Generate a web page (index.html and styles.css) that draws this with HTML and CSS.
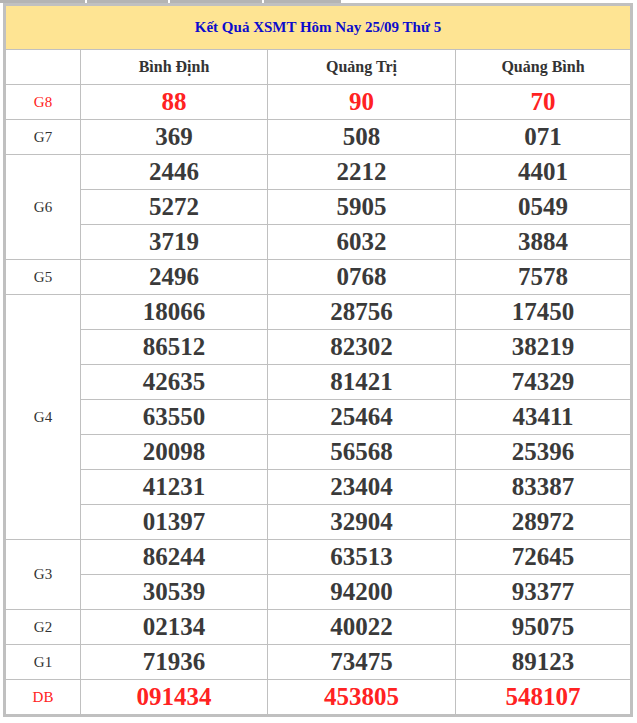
FILE: index.html
```html
<!DOCTYPE html>
<html lang="vi">
<head>
<meta charset="utf-8">
<title>Kết Quả XSMT</title>
<link rel="stylesheet" href="styles.css">
</head>
<body>
<div class="tabs">
  <span class="tab t1"></span>
  <span class="tab t2"></span>
  <span class="tab t3"></span>
  <span class="tab t4"></span>
</div>
<div class="board">
  <div class="grid">
    <div class="title">Kết Quả XSMT Hôm Nay 25/09 Thứ 5</div>
    <div class="head blank"></div>
    <div class="head">Bình Định</div>
    <div class="head">Quảng Trị</div>
    <div class="head">Quảng Bình</div>

    <div class="label red">G8</div>
    <div class="num red">88</div><div class="num red">90</div><div class="num red">70</div>

    <div class="label">G7</div>
    <div class="num">369</div><div class="num">508</div><div class="num">071</div>

    <div class="label span3">G6</div>
    <div class="num">2446</div><div class="num">2212</div><div class="num">4401</div>
    <div class="num">5272</div><div class="num">5905</div><div class="num">0549</div>
    <div class="num">3719</div><div class="num">6032</div><div class="num">3884</div>

    <div class="label">G5</div>
    <div class="num">2496</div><div class="num">0768</div><div class="num">7578</div>

    <div class="label span7">G4</div>
    <div class="num">18066</div><div class="num">28756</div><div class="num">17450</div>
    <div class="num">86512</div><div class="num">82302</div><div class="num">38219</div>
    <div class="num">42635</div><div class="num">81421</div><div class="num">74329</div>
    <div class="num">63550</div><div class="num">25464</div><div class="num">43411</div>
    <div class="num">20098</div><div class="num">56568</div><div class="num">25396</div>
    <div class="num">41231</div><div class="num">23404</div><div class="num">83387</div>
    <div class="num">01397</div><div class="num">32904</div><div class="num">28972</div>

    <div class="label span2">G3</div>
    <div class="num">86244</div><div class="num">63513</div><div class="num">72645</div>
    <div class="num">30539</div><div class="num">94200</div><div class="num">93377</div>

    <div class="label">G2</div>
    <div class="num">02134</div><div class="num">40022</div><div class="num">95075</div>

    <div class="label">G1</div>
    <div class="num">71936</div><div class="num">73475</div><div class="num">89123</div>

    <div class="label red">DB</div>
    <div class="num red">091434</div><div class="num red">453805</div><div class="num red">548107</div>
  </div>
</div>
</body>
</html>
```

FILE: styles.css
```css
html, body {
  margin: 0;
  padding: 0;
  background: #ffffff;
}

body {
  font-family: "Liberation Serif", "Times New Roman", serif;
  color: #333333;
}

.tabs {
  display: flex;
  gap: 2px;
  height: 3px;
}

.tab {
  display: block;
  height: 3px;
  background: #b4b4b4;
}

.t1 { width: 85px; }
.t2 { width: 81px; }
.t3 { width: 92px; }
.t4 { width: 77px; }

.board {
  margin-left: 3px;
  width: 624px;
  border: 3px solid #c0c0c0;
}

.grid {
  display: grid;
  grid-template-columns: 74px 186px 187px 174px;
  grid-template-rows: 43px 34px;
  grid-auto-rows: 34px;
  gap: 1px;
  background: #c0c0c0;
}

.grid > div {
  background: #ffffff;
  display: flex;
  align-items: center;
  justify-content: center;
}

.grid > .title {
  grid-column: 1 / -1;
  background: #fee493;
  color: #0c0ccc;
  font-weight: bold;
  font-size: 15px;
}

.head {
  font-weight: bold;
  font-size: 16px;
  color: #333333;
}

.label {
  font-size: 15px;
  color: #333333;
}

.span2 { grid-row: span 2; }
.span3 { grid-row: span 3; }
.span7 { grid-row: span 7; }

.num {
  font-weight: bold;
  font-size: 25px;
  color: #3a3a3a;
}

.grid > .red {
  color: #ff2222;
}
```
